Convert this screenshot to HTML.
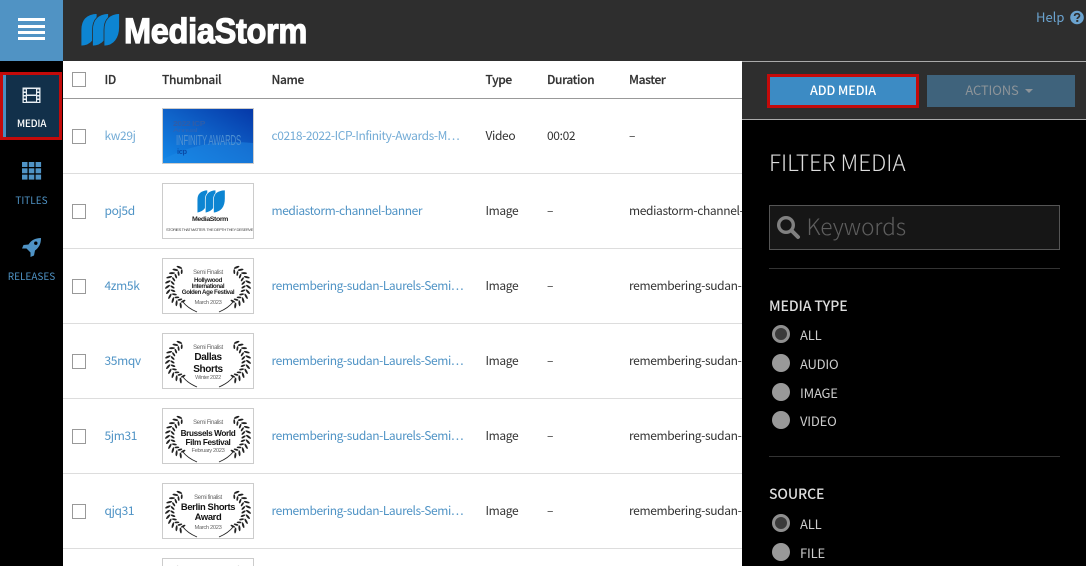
<!DOCTYPE html>
<html lang="en">
<head>
<meta charset="utf-8">
<title>MediaStorm</title>
<style>
*{box-sizing:border-box;margin:0;padding:0}
html,body{width:1086px;height:566px;overflow:hidden;background:#fff}
body{position:relative;font-family:"Noto Sans CJK JP","Liberation Sans",sans-serif;font-size:12px;letter-spacing:-.36px;color:#333}
.a{position:absolute;white-space:nowrap;line-height:16px}
#top{position:absolute;left:0;top:0;width:1086px;height:61px;background:#2e2e2e}
#burger{position:absolute;left:0;top:0;width:63px;height:61px;background:#5093c4}
#burger i{position:absolute;left:18px;width:27px;height:3px;background:#fff}
#side{position:absolute;left:0;top:61px;width:63px;height:505px;background:#000}
#act{position:absolute;left:0;top:72px;width:62px;height:68px;background:#12304a;border:3px solid #c40a0a}
#act b{position:absolute;left:0;top:0;width:3px;height:62px;background:#4a8fc0}
.nav{position:absolute;left:0;width:63px;text-align:center;font-size:10px;line-height:14px;color:#4f93c5;letter-spacing:0}
.hl{position:absolute;left:63px;width:679px;height:1px;background:#ddd}
.th{font-weight:500;color:#333;font-size:12px;top:72px;letter-spacing:-.36px;-webkit-text-stroke:.2px #333}
.cb{position:absolute;left:72px;width:14px;height:15px;background:#fff;border:1px solid #999}
.id,.nm{color:#4f93c5}
.nm{left:271.5px;width:197px;overflow:hidden;letter-spacing:-.42px}
.id{left:104.5px}
.lt{color:#74acd6}
.ty{left:485.5px}.du{left:547px}.ma{left:629px;width:113px;overflow:hidden}
.t{position:absolute;left:162px;width:92px;height:56px;border:1px solid #ccc;background:#fff;overflow:hidden}
.t svg{display:block;filter:blur(.3px)}
#panel{position:absolute;left:742px;top:61px;width:344px;height:505px;background:#000}
#bar{position:absolute;left:0;top:0;width:344px;height:59px;background:#2e2e2e;border-top:1px solid #aaa;border-bottom:1px solid #aaa}
.r{position:absolute;left:772px;width:18px;height:18px;border-radius:50%;background:#999}
.r.on{background:#3a3a3a;border:3px solid #8f8f8f}
.rl{left:800px;color:#ccc;font-size:13px;letter-spacing:-.2px}
.sec{left:769px;color:#ddd;font-size:14px;font-weight:500;letter-spacing:-.1px}
.div{position:absolute;left:769px;width:291px;height:1px;background:#333}
</style>
</head>
<body>
<div id="top"></div>
<div id="burger"><i style="top:18px"></i><i style="top:24.500px"></i><i style="top:31px"></i><i style="top:37px"></i></div>

<svg style="position:absolute;left:0;top:0" width="330" height="61" viewBox="0 0 330 61">
  <g fill="#0d85d2" stroke="#2e2e2e" stroke-width=".8">
    <path d="M81 46V30C81 20 86 14 97 13.500V27C97 38 91 46 81 46Z"/>
    <path d="M92.500 46V30C92.500 20 97 14 108.500 13.500V27C108.500 38 102.500 46 92.500 46Z"/>
    <path d="M104 46V30C104 20 108.500 14 119.500 13.500V27C119.500 38 114 46 104 46Z"/>
  </g>
  <text x="124" y="43" font-family="Liberation Sans" font-weight="700" font-size="35" fill="#fff" stroke="#fff" stroke-width="1.200" textLength="183" lengthAdjust="spacingAndGlyphs">MediaStorm</text>
</svg>

<div class="a" style="left:1036px;top:9px;color:#6ba3cf;font-size:13px;letter-spacing:0">Help</div>
<svg style="position:absolute;left:1070px;top:9.500px" width="14" height="15" viewBox="0 0 14 15">
  <circle cx="7" cy="7.500" r="6.800" fill="#6ba3cf"/>
  <path d="M4.600 6C4.700 4.400 5.700 3.700 7.100 3.700C8.500 3.700 9.500 4.500 9.500 5.700C9.500 7.300 7.300 7.400 7.300 9" fill="none" stroke="#2e2e2e" stroke-width="1.700"/>
  <rect x="6.300" y="10" width="2" height="1.900" fill="#2e2e2e"/>
</svg>

<div id="side"></div>
<div id="act"><b></b></div>
<svg style="position:absolute;left:22px;top:87px" width="19" height="17" viewBox="0 0 19 17" fill="none">
  <rect x=".5" y=".5" width="18" height="15.500" fill="#e8eef3"/>
  <rect x="5" y="2" width="9" height="5.500" fill="#12304a"/>
  <rect x="5" y="9" width="9" height="5.500" fill="#12304a"/>
  <g fill="#12304a"><rect x="1.800" y="2.500" width="2" height="2"/><rect x="1.800" y="6" width="2" height="2"/><rect x="1.800" y="9.500" width="2" height="2"/><rect x="1.800" y="13" width="2" height="2"/><rect x="15.200" y="2.500" width="2" height="2"/><rect x="15.200" y="6" width="2" height="2"/><rect x="15.200" y="9.500" width="2" height="2"/><rect x="15.200" y="13" width="2" height="2"/></g>
</svg>
<div class="nav" style="top:116px;color:#fff;font-weight:500;letter-spacing:-.25px">MEDIA</div>
<svg style="position:absolute;left:22px;top:162px" width="20" height="18" viewBox="0 0 20 18" fill="#4f93c5">
  <rect x="0" y="0" width="5.500" height="5"/><rect x="6.800" y="0" width="5.500" height="5"/><rect x="13.600" y="0" width="5.500" height="5"/>
  <rect x="0" y="6.300" width="5.500" height="5"/><rect x="6.800" y="6.300" width="5.500" height="5"/><rect x="13.600" y="6.300" width="5.500" height="5"/>
  <rect x="0" y="12.600" width="5.500" height="5"/><rect x="6.800" y="12.600" width="5.500" height="5"/><rect x="13.600" y="12.600" width="5.500" height="5"/>
</svg>
<div class="nav" style="top:193px">TITLES</div>
<svg style="position:absolute;left:21px;top:237px" width="21" height="22" viewBox="0 0 21 22">
  <path d="M20 1C14 1 10 3.500 7.500 7.500L2.500 8L1 11.500L5.500 11.500L9.500 15.500V20L13 18.500L14 13.500C18 10.500 20 7 20 1Z" fill="#4f93c5"/>
  <circle cx="14.800" cy="6.200" r="1.700" fill="#000"/>
</svg>
<div class="nav" style="top:269px">RELEASES</div>

<div class="cb" style="top:72px"></div>
<div class="a th" style="left:104.500px">ID</div>
<div class="a th" style="left:162px">Thumbnail</div>
<div class="a th" style="left:271.500px">Name</div>
<div class="a th" style="left:485.500px">Type</div>
<div class="a th" style="left:547px">Duration</div>
<div class="a th" style="left:629px">Master</div>
<div class="hl" style="top:98px;background:#999"></div>

<svg width="0" height="0" style="position:absolute">
  <defs>
    <g id="leaf">
      <ellipse cx="0" cy="0" rx="3" ry="1" transform="rotate(-35)"/>
      <ellipse cx="0.500" cy="0" rx="2.400" ry=".9" transform="translate(4.500 0) rotate(35)"/>
    </g>
    <g id="half" fill="#222">
      <use href="#leaf" transform="rotate(-62 28 27) translate(6 27)"/>
      <use href="#leaf" transform="rotate(-50 28 27) translate(5.500 27)"/>
      <use href="#leaf" transform="rotate(-38 28 27) translate(5 27)"/>
      <use href="#leaf" transform="rotate(-26 28 27) translate(4.500 27)"/>
      <use href="#leaf" transform="rotate(-14 28 27) translate(4.500 27)"/>
      <use href="#leaf" transform="rotate(-2 28 27) translate(4.500 27)"/>
      <use href="#leaf" transform="rotate(10 28 27) translate(4.500 27)"/>
      <use href="#leaf" transform="rotate(22 28 27) translate(4.500 27)"/>
      <use href="#leaf" transform="rotate(34 28 27) translate(5 27)"/>
      <use href="#leaf" transform="rotate(46 28 27) translate(5.500 27)"/>
      <use href="#leaf" transform="rotate(58 28 27) translate(6 27)"/>
      <path d="M20 43C23 47 27 50 34 53" fill="none" stroke="#222" stroke-width=".9"/>
    </g>
    <g id="laurel">
      <use href="#half"/>
      <use href="#half" transform="matrix(-1 0 0 1 90 0)"/>
    </g>
  </defs>
</svg>

<!-- row 1 -->
<div class="cb" style="top:129px"></div>
<div class="a id lt" style="top:128px">kw29j</div>
<div class="t" style="top:108px">
<svg width="90" height="54" viewBox="0 0 90 54">
  <defs><linearGradient id="bg" x1="0" y1="1" x2="1" y2="0"><stop offset="0" stop-color="#1288e8"/><stop offset=".5" stop-color="#0f62c8"/><stop offset="1" stop-color="#0538a8"/></linearGradient></defs>
  <rect width="90" height="54" fill="url(#bg)"/>
  <path d="M0 50C25 38 50 30 90 34V54H0Z" fill="#1d8ae6" opacity=".5"/>
  <text x="10" y="17" font-family="Liberation Sans" font-weight="700" font-size="7" fill="#2f5da8" textLength="32" lengthAdjust="spacingAndGlyphs">2022 ICP</text>
  <text x="10" y="23" font-family="Liberation Sans" font-size="5.500" fill="#2f64b4" textLength="24" lengthAdjust="spacingAndGlyphs">Annual</text>
  <text x="13" y="36" font-family="Liberation Sans" font-size="15" fill="#4f90d2" textLength="65" lengthAdjust="spacingAndGlyphs">INFINITY AWARDS</text>
  <text x="14" y="45" font-family="Liberation Sans" font-weight="700" font-size="7.500" fill="#0a4aa6">icp</text>
</svg></div>
<div class="a nm lt" style="top:128px">c0218-2022-ICP-Infinity-Awards-M…</div>
<div class="a ty" style="top:128px">Video</div>
<div class="a du" style="top:128px">00:02</div>
<div class="a ma" style="top:128px">–</div>
<div class="hl" style="top:173px"></div>

<!-- row 2 -->
<div class="cb" style="top:204px"></div>
<div class="a id" style="top:203px">poj5d</div>
<div class="t" style="top:183px">
<svg width="90" height="54" viewBox="0 0 90 54">
  <g fill="#0d85d2" stroke="#fff" stroke-width=".6" transform="translate(-1 2.400) scale(1.170 1.020)">
    <path d="M30 26V13C30 7 33 4 39 3.500V12C39 20 36 25 30 26Z"/>
    <path d="M37 26V13C37 7 40 4 46 3.500V12C46 20 43 25 37 26Z"/>
    <path d="M44 26V13C44 7 47 4 54 3.500V12C54 20 51 25 44 26Z"/>
  </g>
  <text x="29" y="37" font-family="Liberation Sans" font-weight="700" font-size="6.500" fill="#222" textLength="36" lengthAdjust="spacingAndGlyphs">MediaStorm</text>
  <text x="3" y="47" font-family="Liberation Sans" font-size="3.900" fill="#444" textLength="87" lengthAdjust="spacingAndGlyphs">STORIES THAT MATTER. THE DEPTH THEY DESERVE</text>
</svg></div>
<div class="a nm" style="top:203px">mediastorm-channel-banner</div>
<div class="a ty" style="top:203px">Image</div>
<div class="a du" style="top:203px">–</div>
<div class="a ma" style="top:203px">mediastorm-channel-banner.jpg</div>
<div class="hl" style="top:248px"></div>

<!-- row 3 -->
<div class="cb" style="top:279px"></div>
<div class="a id" style="top:278px">4zm5k</div>
<div class="t" style="top:258px">
<svg width="90" height="54" viewBox="0 0 90 54">
  <use href="#laurel"/>
  <g font-family="Liberation Sans" text-anchor="middle">
    <text x="45" y="15" font-size="6" fill="#666">Semi Finalist</text>
    <text x="45" y="23" font-size="6.200" font-weight="700" fill="#222">Hollywood</text>
    <text x="45" y="29" font-size="6.200" font-weight="700" fill="#222">International</text>
    <text x="45" y="35" font-size="6.200" font-weight="700" fill="#222">Golden Age Festival</text>
    <text x="45" y="45" font-size="5.800" fill="#666">March 2023</text>
  </g>
</svg></div>
<div class="a nm" style="top:278px">remembering-sudan-Laurels-Semi…</div>
<div class="a ty" style="top:278px">Image</div>
<div class="a du" style="top:278px">–</div>
<div class="a ma" style="top:278px">remembering-sudan-Laurels</div>
<div class="hl" style="top:323px"></div>

<!-- row 4 -->
<div class="cb" style="top:354px"></div>
<div class="a id" style="top:353px">35mqv</div>
<div class="t" style="top:333px">
<svg width="90" height="54" viewBox="0 0 90 54">
  <use href="#laurel"/>
  <g font-family="Liberation Sans" text-anchor="middle">
    <text x="45" y="15" font-size="6" fill="#666">Semi Finalist</text>
    <text x="45" y="26" font-size="10" font-weight="700" fill="#111">Dallas</text>
    <text x="45" y="38" font-size="10" font-weight="700" fill="#111">Shorts</text>
    <text x="45" y="45" font-size="5.500" fill="#666">Winter 2022</text>
  </g>
</svg></div>
<div class="a nm" style="top:353px">remembering-sudan-Laurels-Semi…</div>
<div class="a ty" style="top:353px">Image</div>
<div class="a du" style="top:353px">–</div>
<div class="a ma" style="top:353px">remembering-sudan-Laurels</div>
<div class="hl" style="top:398px"></div>

<!-- row 5 -->
<div class="cb" style="top:429px"></div>
<div class="a id" style="top:428px">5jm31</div>
<div class="t" style="top:408px">
<svg width="90" height="54" viewBox="0 0 90 54">
  <use href="#laurel"/>
  <g font-family="Liberation Sans" text-anchor="middle">
    <text x="45" y="15" font-size="6" fill="#666">Semi Finalist</text>
    <text x="45" y="27" font-size="8.200" font-weight="700" fill="#111">Brussels World</text>
    <text x="45" y="36" font-size="8.200" font-weight="700" fill="#111">Film Festival</text>
    <text x="45" y="43" font-size="5.800" fill="#666">February 2023</text>
  </g>
</svg></div>
<div class="a nm" style="top:428px">remembering-sudan-Laurels-Semi…</div>
<div class="a ty" style="top:428px">Image</div>
<div class="a du" style="top:428px">–</div>
<div class="a ma" style="top:428px">remembering-sudan-Laurels</div>
<div class="hl" style="top:473px"></div>

<!-- row 6 -->
<div class="cb" style="top:504px"></div>
<div class="a id" style="top:503px">qjq31</div>
<div class="t" style="top:483px">
<svg width="90" height="54" viewBox="0 0 90 54">
  <use href="#laurel"/>
  <g font-family="Liberation Sans" text-anchor="middle">
    <text x="45" y="15" font-size="6" fill="#666">Semi finalist</text>
    <text x="45" y="26" font-size="9.400" font-weight="700" fill="#111">Berlin Shorts</text>
    <text x="45" y="36" font-size="9.400" font-weight="700" fill="#111">Award</text>
    <text x="45" y="45" font-size="5.800" fill="#666">March 2023</text>
  </g>
</svg></div>
<div class="a nm" style="top:503px">remembering-sudan-Laurels-Semi…</div>
<div class="a ty" style="top:503px">Image</div>
<div class="a du" style="top:503px">–</div>
<div class="a ma" style="top:503px">remembering-sudan-Laurels</div>
<div class="hl" style="top:548px"></div>

<!-- row 7 partial -->
<div class="t" style="top:558px;height:8px;border-bottom:0">
<svg width="90" height="7" viewBox="0 0 90 7"><use href="#laurel"/></svg></div>

<!-- right panel -->
<div id="panel"><div id="bar"></div></div>
<div class="a" style="left:767px;top:74px;width:152px;height:34px;background:#3c8bc4;border:3px solid #c40a0a;color:#fff;font-size:12.600px;letter-spacing:-.1px;font-weight:500;text-align:center;line-height:26px">ADD MEDIA</div>
<div class="a" style="left:927px;top:75px;width:148px;height:32px;background:#3f637c;color:#8d9499;font-size:13px;letter-spacing:-.15px;text-align:center;line-height:30px;padding-right:4px">ACTIONS<span style="display:inline-block;width:0;height:0;border-left:4px solid transparent;border-right:4px solid transparent;border-top:4px solid #8d9499;margin-left:6px;vertical-align:2px"></span></div>

<div class="a" style="left:769px;top:147px;line-height:30px;font-size:22.500px;letter-spacing:0;font-weight:300;color:#ddd">FILTER MEDIA</div>

<div style="position:absolute;left:769px;top:205px;width:291px;height:45px;background:#161616;border:1px solid #555"></div>
<svg style="position:absolute;left:776px;top:215px" width="25" height="25" viewBox="0 0 25 25" fill="none">
  <circle cx="10" cy="10" r="7.300" stroke="#808080" stroke-width="3.400"/>
  <path d="M15.500 15.500L22 22" stroke="#808080" stroke-width="4" stroke-linecap="round"/>
</svg>
<div class="a" style="left:806.500px;top:211px;line-height:30px;font-size:22.500px;letter-spacing:0;font-weight:300;color:#5e5e5e">Keywords</div>
<div class="div" style="top:268px"></div>

<div class="a sec" style="top:298px">MEDIA TYPE</div>
<div class="r on" style="top:325px"></div><div class="a rl" style="top:327px">ALL</div>
<div class="r" style="top:354px"></div><div class="a rl" style="top:356px">AUDIO</div>
<div class="r" style="top:383px"></div><div class="a rl" style="top:385px">IMAGE</div>
<div class="r" style="top:411px"></div><div class="a rl" style="top:413px">VIDEO</div>
<div class="div" style="top:456px"></div>

<div class="a sec" style="top:486px">SOURCE</div>
<div class="r on" style="top:514px"></div><div class="a rl" style="top:516px">ALL</div>
<div class="r" style="top:543px"></div><div class="a rl" style="top:545px">FILE</div>
</body>
</html>
